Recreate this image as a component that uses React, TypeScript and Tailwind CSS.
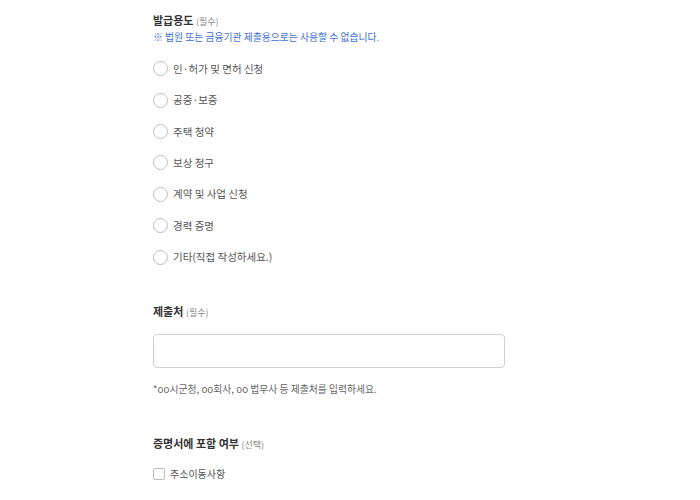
const options = [
  '인·허가 및 면허 신청',
  '공증·보증',
  '주택 청약',
  '보상 청구',
  '계약 및 사업 신청',
  '경력 증명',
  '기타(직접 작성하세요.)',
]

function SectionTitle({ title, note }: { title: string; note: string }) {
  return (
    <p className="h-[14px] leading-[14px] text-[11px] font-bold text-[#333]">
      {title} <span className="text-[9px] font-normal text-[#888]">{note}</span>
    </p>
  )
}

export default function App() {
  return (
    <div className="min-h-[500px] w-[700px] bg-white font-['Noto_Sans_CJK_KR',sans-serif]">
      <div className="ml-[153px] w-[352px] pt-[13px]">
        <SectionTitle title="발급용도" note="(필수)" />
        <p className="mt-[4px] h-[12px] leading-[12px] text-[9.8px] text-[#3d6fd6]">
          ※ 법원 또는 금융기관 제출용으로는 사용할 수 없습니다.
        </p>

        <div className="mt-[10px] flex flex-col">
          {options.map((label) => (
            <label key={label} className="flex h-[31.4px] items-center gap-[5px]">
              <span className="h-[15px] w-[15px] shrink-0 rounded-full border border-[#bdbdbd] bg-white" />
              <span className="text-[10.5px] text-[#555]">{label}</span>
            </label>
          ))}
        </div>

        <div className="mt-[31px]">
          <SectionTitle title="제출처" note="(필수)" />
        </div>
        <div className="mt-[16px] h-[34px] w-[352px] rounded-[4px] border border-[#cfcfcf] bg-white" />
        <p className="mt-[15px] h-[12px] leading-[12px] text-[9.8px] text-[#666]">
          *oo시군청, oo회사, oo 법무사 등 제출처를 입력하세요.
        </p>

        <div className="mt-[41px]">
          <SectionTitle title="증명서에 포함 여부" note="(선택)" />
        </div>
        <label className="mt-[16px] flex h-[16px] items-center gap-[5px]">
          <span className="h-[12px] w-[12px] shrink-0 rounded-[2px] border border-[#bdbdbd] bg-white" />
          <span className="text-[10px] text-[#555]">주소이동사항</span>
        </label>
      </div>
    </div>
  )
}
